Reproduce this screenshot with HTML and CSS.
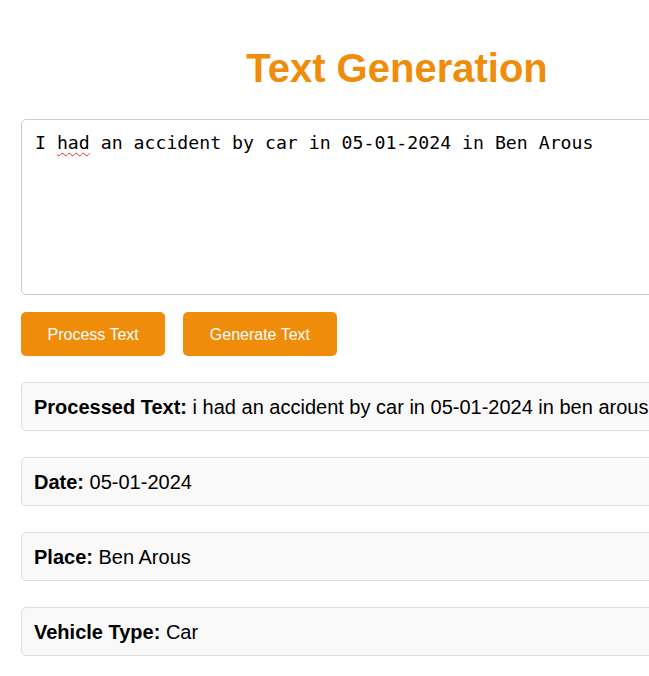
FILE: index.html
```html
<!DOCTYPE html>
<html lang="en">
<head>
<meta charset="utf-8">
<title>Text Generation</title>
<link rel="stylesheet" href="styles.css">
</head>
<body>
<div class="container">
  <h1 class="title">Text Generation</h1>
  <div class="input-box" contenteditable="true" spellcheck="false">I <span class="misspelled">had</span> an accident by car in 05-01-2024 in Ben Arous</div>
  <div class="actions">
    <button class="btn" type="button">Process Text</button>
    <button class="btn" type="button">Generate Text</button>
  </div>
  <div class="results">
    <div class="result"><strong>Processed Text:</strong> i had an accident by car in 05-01-2024 in ben arous</div>
    <div class="result"><strong>Date:</strong> 05-01-2024</div>
    <div class="result"><strong>Place:</strong> Ben Arous</div>
    <div class="result"><strong>Vehicle Type:</strong> Car</div>
  </div>
</div>
</body>
</html>
```

FILE: styles.css
```css
html, body {
  margin: 0;
  padding: 0;
  overflow: hidden;
  background: #ffffff;
  font-family: "Liberation Sans", Arial, sans-serif;
  color: #000;
}

.container {
  width: 752px;
  margin-left: 21px;
}

.title {
  margin: 45px 0 28px;
  font-size: 40px;
  line-height: 46px;
  font-weight: bold;
  text-align: center;
  color: #ef8d0b;
}

.input-box {
  box-sizing: border-box;
  height: 176px;
  padding: 12px 13px;
  border: 1px solid #cccccc;
  border-radius: 5px;
  font-family: "DejaVu Sans Mono", monospace;
  font-size: 18.2px;
  line-height: 21px;
  color: #000;
  white-space: pre-wrap;
  outline: none;
}

.misspelled {
  text-decoration: underline wavy #e8322b;
  text-decoration-thickness: 1px;
  text-underline-offset: 3px;
}

.actions {
  display: flex;
  gap: 18px;
  margin-top: 17px;
}

.btn {
  box-sizing: border-box;
  height: 44px;
  padding: 1px 26.5px 0;
  border: none;
  border-radius: 5px;
  background: #ef8d0b;
  color: #ffffff;
  font-family: "Liberation Sans", Arial, sans-serif;
  font-size: 16px;
  cursor: pointer;
}

.results {
  display: flex;
  flex-direction: column;
  gap: 26px;
  margin-top: 26px;
}

.result {
  box-sizing: border-box;
  height: 49px;
  padding: 13px 12px 11px;
  border: 1px solid #dddddd;
  border-radius: 5px;
  background: #f9f9f9;
  font-size: 20px;
  line-height: 23px;
  white-space: nowrap;
}
```
